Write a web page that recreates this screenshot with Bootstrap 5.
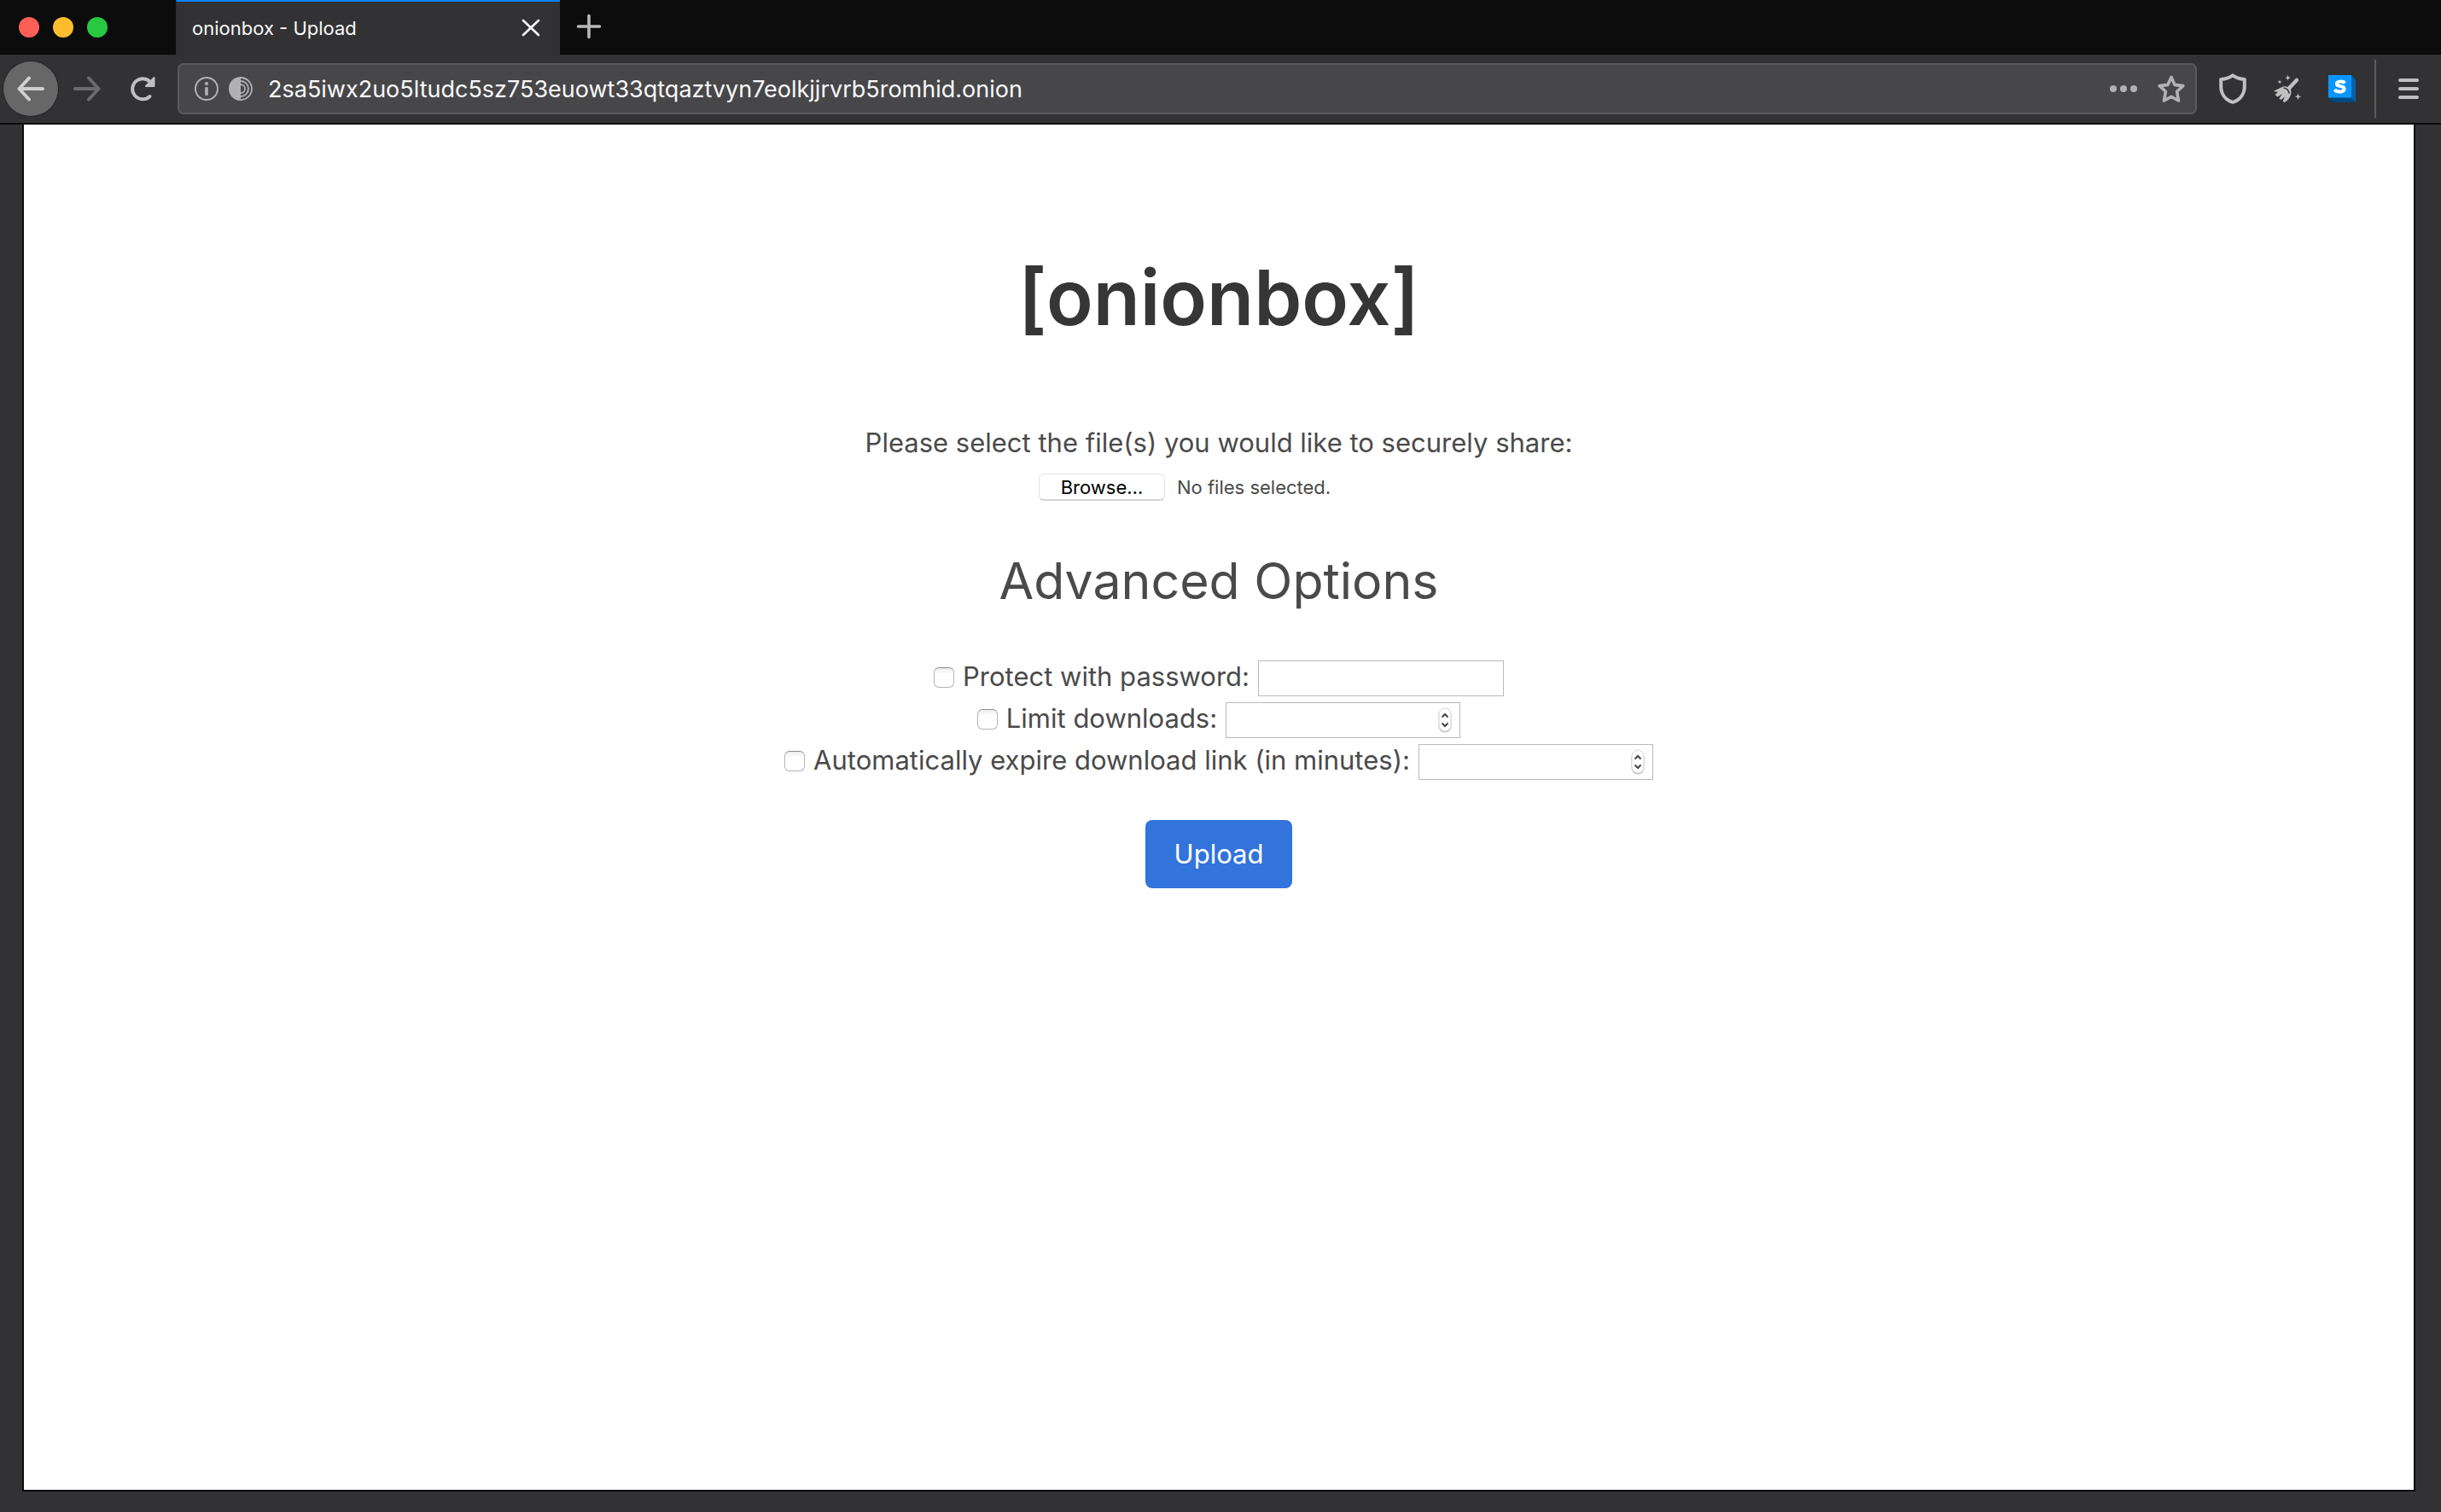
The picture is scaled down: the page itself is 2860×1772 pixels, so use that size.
<!DOCTYPE html>
<html lang="en">
<head>
<meta charset="utf-8">
<meta name="viewport" content="width=device-width, initial-scale=1">
<title>onionbox - Upload</title>
<link rel="stylesheet" href="https://cdn.jsdelivr.net/npm/bootstrap@5.3.0/dist/css/bootstrap.min.css">
<style>
  body { background: #323234; font-family: Inter, "Liberation Sans", sans-serif; color: #4a4a4a; }
  button { font-family: inherit; }

  /* browser window */
  .tab-strip { height: 64px; background: #0c0c0d; border-bottom: 1px solid #050505; }
  .lights { width: 206px; padding-left: 22px; gap: 16px; }
  .light { width: 24px; height: 24px; border-radius: 50%; }
  .light-close { background: #ff5f57; }
  .light-min { background: #ffbd2e; }
  .light-max { background: #28c940; }
  .page-tab { width: 450px; height: 64px; background: #323234; border-top: 2px solid #0a84ff; border-left: 1px solid #2a2a2c; padding: 0 18px; color: #f9f9fa; font-size: 22px; line-height: 32px; }
  .bare { border: 0; background: none; padding: 0; display: inline-flex; align-items: center; justify-content: center; }
  .new-tab { width: 68px; height: 62px; }
  .tool-bar { height: 82px; background: #323234; border-bottom: 2px solid #0c0c0d; padding: 0 6px 0 4px; }
  .tool { width: 64px; height: 64px; flex: none; }
  .nav-tools { gap: 2px; margin-right: 8px; }
  .tool-back { border-radius: 50%; background: #676768; box-shadow: 0 0 0 1px #252526; }
  .address { height: 60px; background: #474749; border: 2px solid #5a5a5c; border-radius: 7px; padding: 0 12px 0 18px; margin-right: 10px; }
  .address input { border: 0; background: none; outline: 0; color: #f9f9fa; font-size: 27px; line-height: 36px; padding: 2px 0 0; margin-left: 18px; min-width: 0; }
  .divider { width: 2px; height: 68px; background: #5c5c5e; margin: 0 6px; }

  /* page */
  .viewport { margin: 0 30px 24px 26px; border: solid #0c0c0d; border-width: 0 2px 2px; background: #fff; padding-top: 149px; font-size: 31px; line-height: 48px; }
  .brand-title { color: #363636; font-size: 90px; line-height: 108px; font-weight: 600; margin-bottom: 92px; }
  .file-row { width: 422px; margin-top: 12px; font-size: 22px; line-height: 30px; gap: 14px; }
  .browse { width: 148px; height: 32px; border-radius: 6px; border: 1px solid #e2e2e2; border-bottom: 2px solid #d4d4d4; background: #fff; color: #000; text-align: center; line-height: 30px; cursor: pointer; }
  .section-title { font-size: 59px; line-height: 72px; font-weight: 400; margin: 58px 0 51px; }
  .option { height: 49px; gap: 10px; }
  .option label { line-height: 49px; }
  .tick { appearance: none; width: 24px; height: 24px; margin: 3px 0 0; border: 1px solid #b4b4b4; border-top-color: #8e8e8e; border-radius: 6px; background: linear-gradient(#ececec, #fff 30%); }
  .field { border: 1px solid #b9b9b9; background: #fff; height: 42px; margin-top: 4px; padding: 0 9px; font-size: 26px; }
  .field-text { width: 288px; }
  .field-number { width: 275px; }
  .field-number svg { flex: none; }
  .field-number input { width: 0; height: 36px; border: 0; outline: 0; padding: 0; background: none; appearance: textfield; }
  .field-number input::-webkit-inner-spin-button { appearance: none; }
  .upload { background: #3273dc; border: 0; border-radius: 8px; width: 172px; height: 80px; font-size: 31px; font-weight: 400; margin-top: 46px; color: #fff; }
</style>
<script src="https://cdn.jsdelivr.net/npm/bootstrap@5.3.0/dist/js/bootstrap.bundle.min.js"></script>
</head>
<body class="d-flex flex-column min-vh-100">

<header>
  <div class="tab-strip d-flex">
    <div class="lights d-flex align-items-center">
      <span class="light light-close"></span><span class="light light-min"></span><span class="light light-max"></span>
    </div>
    <div class="page-tab d-flex align-items-center justify-content-between">
      <span>onionbox - Upload</span>
      <button class="bare" type="button" aria-label="Close tab"><svg width="32" height="32" viewBox="0 0 32 32" fill="none" stroke="#f9f9fa" stroke-width="2.6" stroke-linecap="round"><path d="M7 7l18 17M25 7L7 24"/></svg></button>
    </div>
    <button class="bare new-tab" type="button" aria-label="New tab"><svg width="32" height="32" viewBox="0 0 32 32" stroke="#b9b9ba" stroke-width="3.6" stroke-linecap="round"><path d="M16 3.500v25M3.500 16h25"/></svg></button>
  </div>

  <div class="tool-bar d-flex align-items-center">
    <nav class="nav-tools d-flex" aria-label="History">
      <button class="bare tool tool-back" type="button" aria-label="Back"><svg width="32" height="32" viewBox="0 0 32 32" fill="none" stroke="#d0d0d1" stroke-width="4" stroke-linecap="round" stroke-linejoin="round"><path d="M30 16H3M14 3.500L2.500 16 14 28.500"/></svg></button>
      <button class="bare tool" type="button" aria-label="Forward"><svg width="32" height="32" viewBox="0 0 32 32" fill="none" stroke="#6b6b6d" stroke-width="4" stroke-linecap="round" stroke-linejoin="round"><path d="M2 16h27M18 3.500L29.500 16 18 28.500"/></svg></button>
      <button class="bare tool" type="button" aria-label="Reload"><svg width="32" height="32" viewBox="0 0 32 32" fill="none" stroke="#c0c0c1" stroke-width="4" stroke-linecap="round" stroke-linejoin="round"><path d="M23.500 25A12 12 0 1 1 26 11"/><path d="M28.500 3v10h-9.500z" fill="#c0c0c1" stroke-width="2"/></svg></button>
    </nav>
    <div class="address d-flex align-items-center flex-grow-1">
      <button class="bare" type="button" aria-label="Site information"><svg width="28" height="28" viewBox="0 0 28 28" fill="none" stroke="#b1b1b3"><circle cx="14" cy="14" r="13" stroke-width="2"/><path d="M14 13.500v7" stroke-width="3.600" stroke-linecap="round"/><circle cx="14" cy="8" r="2" fill="#b1b1b3" stroke="none"/></svg></button>
      <button class="bare ms-2 ps-1" type="button" aria-label="Tor circuit"><svg width="28" height="28" viewBox="0 0 28 28" fill="none" stroke="#b1b1b3" stroke-width="1.800"><path d="M14 0a14 14 0 0 0 0 28z" fill="#b1b1b3" stroke="none"/><path d="M14 1a13 13 0 0 1 0 26M14 5a9 9 0 0 1 0 18M14 9a5 5 0 0 1 0 10"/></svg></button>
      <input class="flex-grow-1" type="text" aria-label="Address" value="2sa5iwx2uo5ltudc5sz753euowt33qtqaztvyn7eolkjjrvrb5romhid.onion">
      <button class="bare" type="button" aria-label="Page actions"><svg width="32" height="32" viewBox="0 0 32 32" fill="#b1b1b3"><circle cx="4" cy="16" r="4"/><circle cx="16" cy="16" r="4"/><circle cx="28" cy="16" r="4"/></svg></button>
      <button class="bare ms-4" type="button" aria-label="Bookmark this page"><svg width="32" height="32" viewBox="0 0 32 32" fill="none" stroke="#b1b1b3" stroke-width="3.600" stroke-linejoin="round"><path d="M16 2.500l4.100 8.900 9.700 1.200-7.200 6.700 1.900 10.700L16 25.200 7.500 30l1.900-10.700-7.200-6.700 9.700-1.200z"/></svg></button>
    </div>
    <button class="bare tool" type="button" aria-label="Security level"><svg width="32" height="36" viewBox="0 0 32 36" fill="none" stroke="#c0c0c1" stroke-width="4" stroke-linejoin="round"><path d="M16 2.300C12 5 7 6.600 2.200 7v8c0 9 5 16 13.800 18.800C24.800 31 29.800 24 29.800 15V7C25 6.600 20 5 16 2.300z"/></svg></button>
    <button class="bare tool" type="button" aria-label="New identity"><svg width="32" height="32" viewBox="0 0 32 32" fill="#c0c0c1"><path d="M25.500 4.200a2.200 2.200 0 0 1 3.100 3.100L20 16.500c1.300 4 .2 8-3.200 12.500l-4 3-2.200-1.500 2.400-5-4.600 3.600-2-1.700 3.600-5.200-5.600 3.300L1.600 23 5 19.800l-4-.6L0 18.500C5.500 17 8.500 14 12 13.300c1.500-.3 3 0 4.200.7z"/><path d="M11.500 15c4 .5 6 2.700 6.600 6.600" fill="none" stroke="#323234" stroke-width="1.500"/><path d="M16.500 0l.9 2.300 2.400.9-2.400.9-.9 2.300-.9-2.300-2.300-.9 2.300-.9zM7 5.500l.7 1.800 1.800.7-1.800.7L7 10.500l-.7-1.800L4.500 8l1.800-.7zM28.500 21.500l1 2.700 2.600 1-2.600 1-1 2.700-1-2.700-2.600-1 2.600-1z"/></svg></button>
    <button class="bare tool" type="button" aria-label="NoScript"><svg width="32" height="32" viewBox="0 0 32 32"><path d="M0 26.500h27L32 32H6z" fill="#004a82"/><path d="M27 0l5 5.500V32l-5-5.500z" fill="#0063ad"/><path d="M0 0h27v26.500H0z" fill="#0a96ff"/><path d="M19.500 9.300C18 7.700 15.500 7.200 13 7.600c-4 .7-4 4.200-.3 5l3 .8c4 1 3.700 5.300-.7 6-3.200.5-5.900-.4-7.600-2.400" fill="none" stroke="#fff" stroke-width="4"/></svg></button>
    <span class="divider"></span>
    <button class="bare tool" type="button" aria-label="Open menu"><svg width="24" height="24" viewBox="0 0 24 24" stroke="#c0c0c1" stroke-width="4" stroke-linecap="round"><path d="M2 2h20M2 12h20M2 22h20"/></svg></button>
  </div>
</header>

<main class="viewport flex-grow-1 text-center">
  <h1 class="brand-title">[onionbox]</h1>
  <form>
    <p class="mb-0">Please select the file(s) you would like to securely share:</p>
    <div class="file-row d-flex align-items-center mx-auto">
      <input class="visually-hidden" type="file" id="files" multiple>
      <label class="browse" for="files">Browse…</label>
      <span>No files selected.</span>
    </div>

    <h2 class="section-title">Advanced Options</h2>
    <div class="option d-flex justify-content-center align-items-center">
      <input class="tick" type="checkbox" id="use-password">
      <label for="use-password">Protect with password:</label>
      <input class="field field-text" type="password" aria-label="Password">
    </div>
    <div class="option d-flex justify-content-center align-items-center">
      <input class="tick" type="checkbox" id="use-limit">
      <label for="use-limit">Limit downloads:</label>
      <div class="field field-number d-flex align-items-center">
        <input class="flex-grow-1" type="number" aria-label="Download limit">
        <svg width="16" height="30" viewBox="0 0 16 30" fill="none"><rect x=".5" y="1.500" width="15" height="28" rx="7.500" fill="#bdbdbd"/><rect x="1" y="1" width="14" height="27" rx="7" fill="#fff" stroke="#d6d6d6"/><path d="M4.500 11.500L8 8l3.500 3.500M4.500 18.500L8 22l3.500-3.500" stroke="#444" stroke-width="2"/></svg>
      </div>
    </div>
    <div class="option d-flex justify-content-center align-items-center">
      <input class="tick" type="checkbox" id="use-expiry">
      <label for="use-expiry">Automatically expire download link (in minutes):</label>
      <div class="field field-number d-flex align-items-center">
        <input class="flex-grow-1" type="number" aria-label="Minutes until the link expires">
        <svg width="16" height="30" viewBox="0 0 16 30" fill="none"><rect x=".5" y="1.500" width="15" height="28" rx="7.500" fill="#bdbdbd"/><rect x="1" y="1" width="14" height="27" rx="7" fill="#fff" stroke="#d6d6d6"/><path d="M4.500 11.500L8 8l3.500 3.500M4.500 18.500L8 22l3.500-3.500" stroke="#444" stroke-width="2"/></svg>
      </div>
    </div>
    <button class="btn upload" type="submit">Upload</button>
  </form>
</main>

</body>
</html>
